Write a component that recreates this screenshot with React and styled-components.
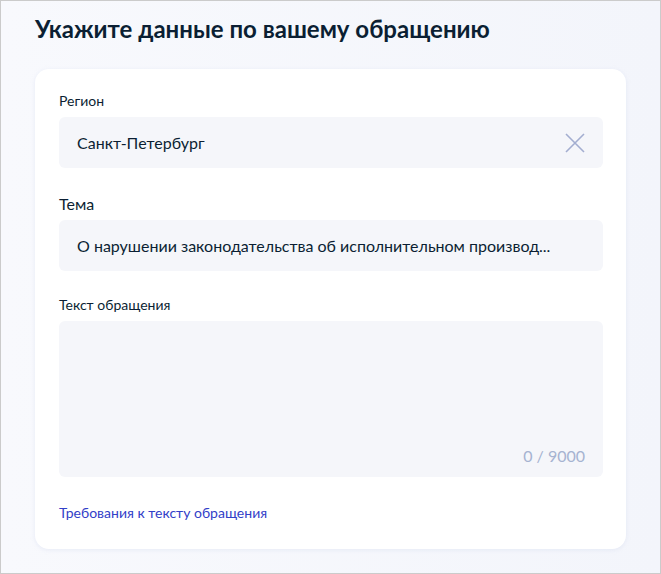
import React from "react";
import styled, { createGlobalStyle } from "styled-components";

const GlobalStyle = createGlobalStyle`
  html, body {
    margin: 0;
    padding: 0;
  }
  body {
    font-family: "Lato", "Noto Sans", sans-serif;
    color: #0b1f33;
  }
`;

const Page = styled.div`
  box-sizing: border-box;
  width: 661px;
  height: 574px;
  border: 1px solid #cbcbcb;
  background: linear-gradient(to right, #f8f9fd, #f3f5fb);
  padding: 14px 34px 0;
`;

const Title = styled.h1`
  margin: 0;
  font-size: 24px;
  line-height: 28px;
  font-weight: 700;
  color: #0b1f33;
`;

const Card = styled.div`
  margin-top: 26px;
  width: 591px;
  box-sizing: border-box;
  height: 480px;
  background: #fff;
  border-radius: 14px;
  box-shadow: 0 1px 4px rgba(200, 210, 235, 0.35);
  padding: 23px 23px 0 24px;
  display: flex;
  flex-direction: column;
`;

const Field = styled.div`
  display: flex;
  flex-direction: column;
  margin-bottom: ${(p) => p.$gap || 0}px;
`;

const Label = styled.label`
  font-size: ${(p) => p.$size || 14}px;
  line-height: 18px;
  color: #0b1f33;
  margin-bottom: 7px;
`;

const Input = styled.div`
  box-sizing: border-box;
  height: 51px;
  background: #f5f6fa;
  border-radius: 6px;
  padding: 0 18px;
  display: flex;
  align-items: center;
  justify-content: space-between;
  font-size: 16px;
  color: #0b1f33;
`;

const Value = styled.span`
  white-space: nowrap;
  overflow: hidden;
  text-overflow: ellipsis;
`;

const Clear = styled.span`
  display: flex;
  color: #a3aed0;
`;

const Area = styled.div`
  box-sizing: border-box;
  height: 156px;
  background: #f5f6fa;
  border-radius: 6px;
  display: flex;
  align-items: flex-end;
  justify-content: flex-end;
  padding: 0 18px 12px;
`;

const Counter = styled.span`
  font-size: 16px;
  color: #a6b3d1;
`;

const Link = styled.a`
  margin-top: 27px;
  font-size: 14px;
  color: #3240c8;
  text-decoration: none;
`;

const X = () => (
  <svg width="20" height="20" viewBox="0 0 20 20" fill="none">
    <path d="M1 1L19 19M19 1L1 19" stroke="currentColor" strokeWidth="1.6" />
  </svg>
);

export default function App() {
  return (
    <Page>
      <GlobalStyle />
      <Title>Укажите данные по вашему обращению</Title>
      <Card>
        <Field $gap={27}>
          <Label>Регион</Label>
          <Input>
            <Value>Санкт-Петербург</Value>
            <Clear>
              <X />
            </Clear>
          </Input>
        </Field>
        <Field $gap={25}>
          <Label $size={16}>Тема</Label>
          <Input>
            <Value>О нарушении законодательства об исполнительном производ...</Value>
          </Input>
        </Field>
        <Field>
          <Label>Текст обращения</Label>
          <Area>
            <Counter>0 / 9000</Counter>
          </Area>
        </Field>
        <Link href="#">Требования к тексту обращения</Link>
      </Card>
    </Page>
  );
}
